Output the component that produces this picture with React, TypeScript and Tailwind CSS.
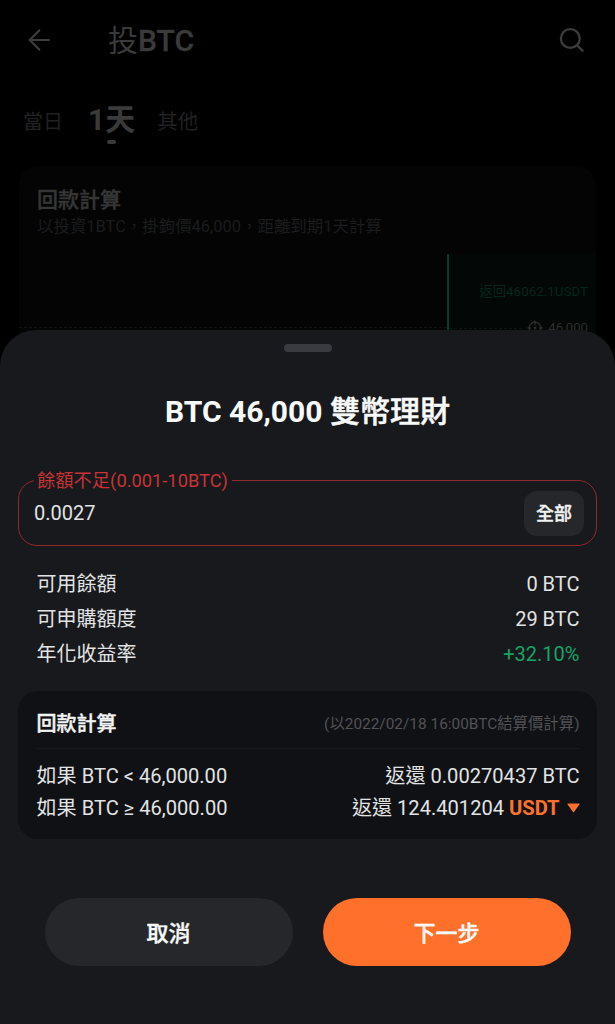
import type { ReactNode } from "react";

function ArrowLeft() {
  return (
    <svg width="24" height="24" viewBox="0 0 24 24" fill="none" stroke="#3c3c3c" strokeWidth="2.2" className="block">
      <path d="M13 1.8 2.8 12 13 22.2M2.8 12h20" />
    </svg>
  );
}

function SearchIcon() {
  return (
    <svg width="26" height="26" viewBox="0 0 26 26" fill="none" stroke="#3c3c3c" strokeWidth="2.3" className="block">
      <circle cx="11.3" cy="11.5" r="9.4" />
      <path d="m18 18.2 6.2 6.2" />
    </svg>
  );
}

function TargetIcon() {
  return (
    <svg width="16" height="16" viewBox="0 0 16 16" fill="none" stroke="#2b2e2d" strokeWidth="1.3" className="block">
      <circle cx="8" cy="8" r="5.8" />
      <circle cx="8" cy="8" r="1.4" fill="#2b2e2d" stroke="none" />
      <path d="M8 .5V5M8 11v4.5M.5 8H4M12 8h3.5" />
    </svg>
  );
}

function Row({ label, children, className }: { label: string; children: ReactNode; className: string }) {
  return (
    <div className={`flex items-center justify-between whitespace-nowrap leading-[28px] text-[#e2e3e4] ${className}`}>
      <span>{label}</span>
      {children}
    </div>
  );
}

function Backdrop() {
  return (
    <div className="flex h-[400px] flex-col">
      <header className="flex h-20 items-center pl-[27px] pr-[30px]">
        <ArrowLeft />
        <h1 className="ml-[57px] mt-[2px] flex-1 text-[30px] font-medium leading-[36px] text-[#3a3a3a] [-webkit-text-stroke:0.3px]">
          <span className="font-normal [-webkit-text-stroke:0]">投</span>BTC
        </h1>
        <SearchIcon />
      </header>
      <nav className="flex h-[86px] items-start pl-[23px] pt-5 text-[#202123]">
        <span className="mt-[8px] text-[20px] leading-[28px]">當日</span>
        <div className="ml-[25px] flex flex-col items-center">
          <span className="h-[40px] text-[30px] font-bold leading-[40px] text-[#3a3a3a]">1天</span>
          <span className="h-[4px] w-[9px] rounded-full bg-[#3a3a3a]" />
        </div>
        <span className="ml-[22px] mt-[8px] text-[20.5px] leading-[28px]">其他</span>
      </nav>
      <section className="mx-[19px] flex flex-1 flex-col rounded-t-[20px] bg-[#040404] pt-[20px]">
        <h2 className="pl-[18px] text-[21px] font-medium leading-[28px] text-[#363636] [-webkit-text-stroke:0.4px]">回款計算</h2>
        <p className="whitespace-nowrap pl-[18px] text-[16.45px] leading-[26px] text-[#1b1c1d]">
          以投資1BTC，掛鉤價46,000，距離到期1天計算
        </p>
        <div className="mt-[14px] flex flex-1">
          <div className="w-[428px] pt-[73px]">
            <div className="border-t border-dashed border-[#111212]" />
          </div>
          <div className="flex flex-1 flex-col items-end border-l-2 border-[#063d26] bg-[#030706] pr-[8px] pt-[27px]">
            <span className="whitespace-nowrap text-[13.4px] leading-[22px] text-[#04271a]">返回46062.1USDT</span>
            <div className="mt-[14px] flex items-center gap-[5px] self-stretch text-[13.2px] leading-[22px] text-[#2b2e2d]">
              <div className="flex-1 border-t border-dashed border-[#0d1513]" />
              <TargetIcon />
              <span>46,000</span>
            </div>
          </div>
        </div>
      </section>
    </div>
  );
}

function Sheet() {
  return (
    <div className="absolute inset-x-0 bottom-0 flex h-[694px] flex-col rounded-t-[36px] bg-[#18191c] px-[18px]">
      <div className="mt-[14px] h-[8px] w-[48px] self-center rounded-full bg-[#393b41]" />
      <h2 className="mt-[40px] h-[40px] whitespace-nowrap text-center text-[30px] font-bold leading-[40px] text-[#f8f9f9]">
        BTC 46,000 <span className="font-medium [-webkit-text-stroke:0.5px]">雙幣理財</span>
      </h2>
      <fieldset className="mt-[38px] h-[76px] rounded-[19px] border border-[#92292d] pl-[15px] pr-[12px]">
        <legend className="h-[20px] whitespace-nowrap pl-[3px] pr-[4px] text-[18.3px] leading-[22px] text-[#c73337]">
          餘額不足(0.001-10BTC)
        </legend>
        <div className="flex h-[46px] items-center justify-between">
          <span className="text-[20px] leading-[28px] text-[#e2e3e4]">0.0027</span>
          <button className="h-[45px] w-[60px] rounded-[13px] bg-[#26272a] text-[18px] font-medium text-[#f2f3f3] [-webkit-text-stroke:0.4px]">全部</button>
        </div>
      </fieldset>
      <div className="mt-[20px] pl-[18.5px] pr-[17.5px] text-[20px]">
        <Row label="可用餘額" className="h-[35px] pt-px"><span>0 BTC</span></Row>
        <Row label="可申購額度" className="h-[35px] pt-px"><span>29 BTC</span></Row>
        <Row label="年化收益率" className="h-[35px] pt-px"><span className="text-[#16a366]">+32.10%</span></Row>
      </div>
      <section className="mt-[20px] h-[148px] rounded-[20px] bg-[#101114] pl-[18.5px] pr-[17.5px]">
        <div className="flex h-[58px] items-center justify-between border-b border-[#18191c] pt-[8px]">
          <h3 className="text-[20px] font-medium leading-[28px] text-[#f2f3f3] [-webkit-text-stroke:0.4px]">回款計算</h3>
          <span className="whitespace-nowrap text-[15.4px] leading-[24px] text-[#505256]">(以2022/02/18 16:00BTC結算價計算)</span>
        </div>
        <div className="pt-[11px] text-[20.1px]">
          <Row label="如果 BTC < 46,000.00" className="h-[32px]"><span>返還 0.00270437 BTC</span></Row>
          <Row label="如果 BTC ≥ 46,000.00" className="h-[32px]">
            <span className="flex items-center">
              返還 124.401204
              <b className="ml-[5px] font-bold text-[#ff712a]">USDT</b>
              <svg width="13" height="10" viewBox="0 0 13 10" className="ml-[7px] block">
                <path d="M1 .5h11q1 0 .4 1L7.2 8.8q-.7 1-1.4 0L.6 1.5Q0 .5 1 .5Z" fill="#ff712a" />
              </svg>
            </span>
          </Row>
        </div>
      </section>
      <div className="mt-[59px] flex justify-center gap-[30px]">
        <button className="h-[68px] w-[248px] rounded-full bg-[#26272a] pt-[2px] text-[22px] font-medium text-[#f8f9f9] [-webkit-text-stroke:0.4px]">取消</button>
        <button className="h-[68px] w-[248px] rounded-full bg-[#ff712a] pt-[2px] text-[22px] font-medium text-[#f8f9f9] [-webkit-text-stroke:0.4px]">下一步</button>
      </div>
    </div>
  );
}

export default function App() {
  return (
    <main lang="zh-Hant" className="relative h-[1024px] w-[615px] overflow-hidden bg-black font-[Roboto,'Noto_Sans_CJK_TC',sans-serif]">
      <Backdrop />
      <Sheet />
    </main>
  );
}
